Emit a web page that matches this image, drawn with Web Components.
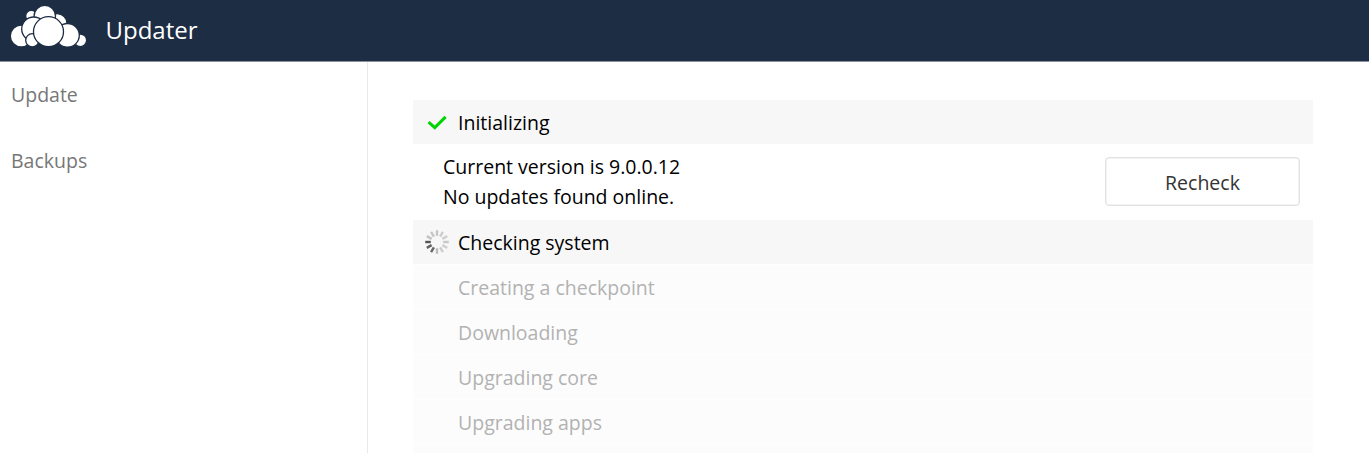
<!DOCTYPE html>
<html lang="en">
<head>
<meta charset="utf-8">
<title>Updater</title>
<style>
body { margin: 0; height: 453px; overflow: hidden; background: #fff; font-family: "Open Sans", sans-serif; font-size: 19.5px; line-height: 30px; color: #000; }
</style>
</head>
<body>
<updater-app></updater-app>
<script>
const define = (name, html, setup) => {
  const template = document.createElement('template');
  template.innerHTML = html;
  customElements.define(name, class extends HTMLElement {
    constructor() {
      super();
      this.attachShadow({ mode: 'open' }).append(template.content.cloneNode(true));
      if (setup) setup(this.shadowRoot);
    }
  });
};

define('cloud-logo', `
<style>:host{display:block;width:78px;height:44px}svg{display:block}</style>
<svg width="78" height="44" viewBox="10 4 78 44" fill="#fff" stroke="#1d2d44" stroke-width="1.3">
  <circle cx="31.3" cy="16" r="5.6"/>
  <circle cx="57.2" cy="23.5" r="9.8"/>
  <circle cx="44.8" cy="16" r="10.7"/>
  <circle cx="21.3" cy="36" r="11"/>
  <circle cx="80.3" cy="40.3" r="6.3"/>
  <circle cx="67.5" cy="35.3" r="11.8"/>
  <circle cx="33.7" cy="29" r="12"/>
  <circle cx="32.3" cy="40.3" r="6.6"/>
  <circle cx="48.5" cy="31.7" r="15"/>
</svg>`);

define('check-icon', `
<style>:host{display:block}svg{display:block}</style>
<svg width="24" height="24" viewBox="0 0 24 24" fill="none" stroke="#00d400" stroke-width="3"><path d="M3.6 12.2 9.8 17.6 20.6 6.9"/></svg>`);

define('busy-icon', `
<style>:host{display:block}svg{display:block}</style>
<svg width="24" height="24" viewBox="-12 -12 24 24" stroke-width="2.4"></svg>`, root => {
  const shades = ['#c4c4c4','#cdcdcd','#cfcfcf','#c8c8c8','#d0d0d0','#cccccc','#bdbdbd','#676767','#606060','#555','#c3c3c3','#c6c6c6'];
  const svg = root.querySelector('svg');
  shades.forEach((shade, i) => {
    const line = document.createElementNS('http://www.w3.org/2000/svg', 'line');
    line.setAttribute('y1', '-6.2');
    line.setAttribute('y2', '-11.8');
    line.setAttribute('stroke', shade);
    line.setAttribute('transform', 'rotate(' + i * 30 + ')');
    svg.append(line);
  });
});

define('app-header', `
<style>
:host{display:flex;align-items:center;box-sizing:border-box;height:62px;padding:0 0 1px 10px;background:#1d2d44;border-bottom:1px solid #8791a1;color:#fff}
cloud-logo{margin-top:-8px}
.name{margin-left:17.5px;font-size:24px;line-height:32px}
</style>
<cloud-logo></cloud-logo><span class="name"><slot></slot></span>`);

define('nav-item', `
<style>:host{display:block;height:66px;box-sizing:border-box;padding:18px 11px;color:#777}</style><slot></slot>`);

define('side-nav', `
<style>:host{display:block;width:368px;box-sizing:border-box;border-right:1px solid #e9e9e9;flex:none}</style><slot></slot>`);

define('step-row', `
<style>
:host{display:block}
.head{display:flex;align-items:center;height:44px;border-bottom:1px solid #fefefe;background:#f7f7f7}
.icon{width:24px;height:24px;margin:0 9px 0 12px}
:host([pending]) .head{background:#fcfcfc;color:#b2b2b2}
.title{padding-top:2px}
</style>
<div class="head"><div class="icon"><slot name="icon"></slot></div><span class="title"><slot></slot></span></div>
<slot name="body"></slot>`);

define('push-button', `
<style>button{display:block;box-sizing:border-box;width:195px;height:49px;padding:3px 0 0;border:1.5px solid #e1e1e1;box-shadow:inset 0 0 0 .5px #e8e8e8;border-radius:4px;background:#fff;font:19.5px/30px "Open Sans",sans-serif;color:#333}</style>
<button><slot></slot></button>`);

define('step-result', `
<style>:host{display:flex;align-items:center;justify-content:space-between;height:75px;padding:0 13px 2px 30px;box-sizing:border-box}</style>
<div><slot></slot></div><slot name="action"></slot>`);

define('updater-app', `
<style>
:host{display:block}
main{display:flex;height:391px;overflow:hidden}
.steps{width:900px;height:353px;overflow:hidden;padding:38px 0 0 45px}
</style>
<app-header>Updater</app-header>
<main>
<side-nav><nav-item>Update</nav-item><nav-item>Backups</nav-item></side-nav>
<div class="steps">
<step-row><check-icon slot="icon"></check-icon>Initializing
<step-result slot="body"><div>Current version is 9.0.0.12</div><div>No updates found online.</div><push-button slot="action">Recheck</push-button></step-result></step-row>
<step-row><busy-icon slot="icon"></busy-icon>Checking system</step-row>
<step-row pending>Creating a checkpoint</step-row>
<step-row pending>Downloading</step-row>
<step-row pending>Upgrading core</step-row>
<step-row pending>Upgrading apps</step-row>
<step-row pending></step-row>
</div>
</main>`);
</script>
</body>
</html>
